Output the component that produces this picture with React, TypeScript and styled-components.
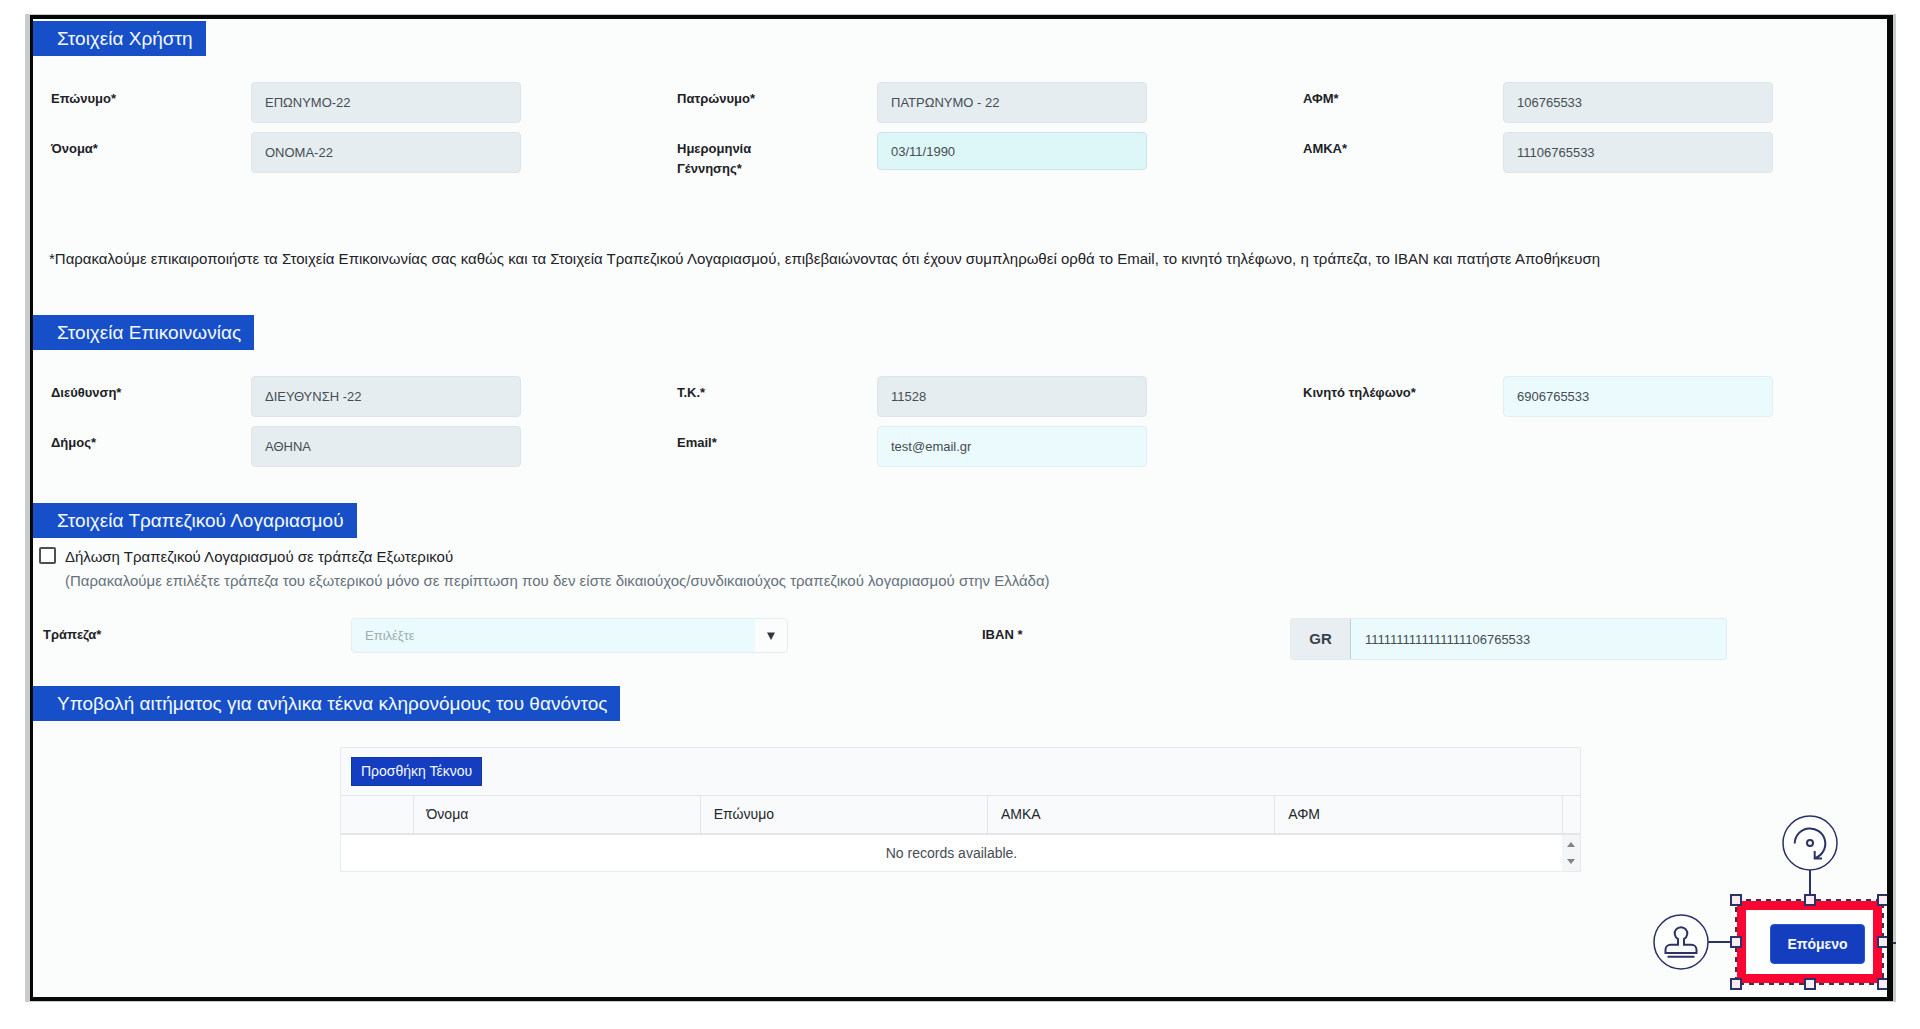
import React, { useId } from "react";
import styled, { createGlobalStyle } from "styled-components";

const GlobalStyle = createGlobalStyle`
  *, *::before, *::after { box-sizing: border-box; }
  body {
    margin: 0;
    background: #ffffff;
    color: #1d2226;
    font-family: "Liberation Sans", Arial, sans-serif;
    font-size: 14px;
    line-height: 20px;
  }
  input, select, button { font-family: inherit; }
`;

const Shell = styled.div`
  position: relative;
  margin: 14px 24px 24px 25px;
  padding: 1px 3px 1px 5px;
  background: #c9cccb;

  &::after {
    content: "";
    position: absolute;
    right: 0;
    bottom: 58px;
    width: 3px;
    height: 2px;
    background: #2b3264;
  }
`;

const Frame = styled.main`
  display: flex;
  flex-direction: column;
  padding: 2px 0 13px;
  overflow: hidden;
  border: solid #050807;
  border-width: 4px 6px 4px 3px;
  background: #fbfdfd;
`;

const SectionTitle = styled.h2`
  align-self: flex-start;
  margin: 0 0 26px;
  padding: 0 13px 0 24px;
  background: #174fc9;
  color: #f4faff;
  font-size: 19px;
  font-weight: 400;
  line-height: 35px;
`;

const FieldGrid = styled.div<{ $after: number }>`
  display: grid;
  grid-template-columns: repeat(3, minmax(0, 1fr));
  gap: 9px 156px;
  margin: 0 114px ${(p) => p.$after}px 18px;
`;

const FieldBox = styled.div`
  display: grid;
  grid-template-columns: minmax(0, 20fr) minmax(0, 27fr);
  align-items: start;
`;

const Label = styled.label`
  max-width: 120px;
  padding-top: 7px;
  font-size: 13px;
  font-weight: 700;
`;

type Tone = "locked" | "open" | "date";

const tones: Record<Tone, { bg: string; line: string; height: number }> = {
  locked: { bg: "#e5edf0", line: "#e0e4e8", height: 41 },
  open: { bg: "#ebfafc", line: "#e1eef2", height: 41 },
  date: { bg: "#ddf6f8", line: "#cde2ea", height: 38 },
};

const TextInput = styled.input<{ $tone: Tone }>`
  width: 100%;
  height: ${(p) => tones[p.$tone].height}px;
  padding: 0 13px;
  border: 1px solid ${(p) => tones[p.$tone].line};
  border-radius: 4px;
  background: ${(p) => tones[p.$tone].bg};
  color: #454d53;
  font-size: 13px;
  outline: none;
`;

const Notice = styled.p`
  margin: 0 24px 44px 16px;
  font-size: 15px;
  line-height: 24px;
`;

const ForeignBank = styled.div`
  display: grid;
  grid-template-columns: 17px 1fr;
  column-gap: 9px;
  margin: -19px 0 25px 6px;
  font-size: 15px;
  line-height: 24px;
`;

const CheckBox = styled.input`
  appearance: none;
  width: 17px;
  height: 17px;
  margin: 2px 0 0;
  border: 2px solid #4a5054;
  border-radius: 2px;
  background: #ffffff;

  &:checked { background: #174fc9; }
`;

const Hint = styled.span`
  grid-column: 2;
  color: #66717b;
`;

const BankGrid = styled.div`
  display: grid;
  grid-template-columns: repeat(2, minmax(0, 1fr));
  column-gap: 194px;
  margin: 0 160px 26px 10px;
`;

const BankField = styled.div`
  display: grid;
  grid-template-columns: minmax(0, 308fr) minmax(0, 437fr);
  align-items: start;
`;

const SelectBox = styled.div`
  display: grid;
  grid-template-columns: 1fr 32px;
  height: 35px;
  border: 1px solid #e4edf0;
  border-radius: 4px;
  background: #fbfdfd;
  overflow: hidden;
`;

const Select = styled.select`
  grid-area: 1 / 1 / 2 / 3;
  appearance: none;
  padding: 0 13px;
  border: 0;
  background: linear-gradient(#ebfafc, #ebfafc) left / calc(100% - 32px) 100% no-repeat;
  color: #9aaeb1;
  font-size: 13px;
  outline: none;
`;

const SelectArrow = styled.svg`
  grid-area: 1 / 2 / 2 / 3;
  place-self: center;
  pointer-events: none;
`;

const IbanGroup = styled.div`
  display: flex;
  height: 42px;
  border: 1px solid #dfecf0;
  border-radius: 3px;
  background: #ebfafc;
`;

const IbanPrefix = styled.span`
  display: flex;
  align-items: center;
  justify-content: center;
  width: 60px;
  border-right: 1px solid #bdd3da;
  background: #e8eef1;
  color: #39434b;
  font-size: 15px;
  font-weight: 700;
`;

const IbanInput = styled.input`
  flex: 1;
  min-width: 0;
  padding: 0 14px;
  border: 0;
  background: transparent;
  color: #454d53;
  font-size: 13px;
  outline: none;
`;

const GridPanel = styled.div`
  margin: 0 306px 28px 307px;
  border: 1px solid #e8ebee;
`;

const Toolbar = styled.div`
  padding: 9px 10px;
  background: #f8fafc;
`;

const AddButton = styled.button`
  display: block;
  height: 29px;
  padding: 0 9px;
  border: 1px solid #1238a0;
  background: #153dc0;
  color: #f4faff;
  font-size: 14px;
  line-height: 27px;
`;

const Table = styled.table`
  width: 100%;
  border-collapse: collapse;
  table-layout: fixed;
`;

const HeadCell = styled.th`
  height: 38px;
  padding: 0 13px;
  border: solid #e3e6e9;
  border-width: 1px 0 2px 1px;
  background: #f8fafc;
  color: #22272b;
  font-size: 14px;
  font-weight: 400;
  text-align: left;

  &:first-child { border-left: 0; }
`;

const EmptyCell = styled.td`
  height: 37px;
  padding: 0;
  background: #ffffff;
  color: #454d53;
  font-size: 14px;
  text-align: center;
`;

const ScrollCell = styled.td`
  padding: 0;
  background: #f4f5f6;
  text-align: center;

  svg { display: block; margin: 0 auto; }
`;

const ink = "#2b3264";

const Selection = styled.div`
  position: relative;
  align-self: flex-end;
  margin-right: 4px;
  padding: 14px 8px 10px 24px;
  border: 10px solid #fb0532;
  background: #ffffff;
`;

const DashedEdge = styled.svg`
  position: absolute;
  inset: -10px;
  width: calc(100% + 20px);
  height: calc(100% + 20px);
  overflow: visible;
  pointer-events: none;
`;

const NextButton = styled.button`
  display: block;
  width: 95px;
  height: 40px;
  padding: 0;
  border: 1px solid #2459cf;
  border-radius: 4px;
  background: #143ebd;
  color: #f4faff;
  font-size: 14px;
  font-weight: 700;
`;

const Handle = styled.span<{ $x: number; $y: number }>`
  position: absolute;
  left: ${(p) => p.$x}%;
  top: ${(p) => p.$y}%;
  width: 12px;
  height: 12px;
  margin: ${(p) => (p.$y - 50) / 5 - 6}px 0 0 ${(p) => (p.$x - 50) / 5 - 6}px;
  border: 2px solid ${ink};
  background: #f8ecf2;
`;

const RotateTool = styled.svg`
  position: absolute;
  left: calc(50% - 28px);
  bottom: calc(100% + 15px);
`;

const StampTool = styled.svg`
  position: absolute;
  right: calc(100% + 13px);
  top: calc(50% - 28px);
`;

type FieldProps = { label: string; value: string; tone?: Tone; type?: string };

function Field({ label, value, tone = "locked", type = "text" }: FieldProps) {
  const id = useId();
  return (
    <FieldBox>
      <Label htmlFor={id}>{label}</Label>
      <TextInput id={id} type={type} defaultValue={value} readOnly={tone === "locked"} $tone={tone} />
    </FieldBox>
  );
}

const userFields: FieldProps[] = [
  { label: "Επώνυμο*", value: "ΕΠΩΝΥΜΟ-22" },
  { label: "Πατρώνυμο*", value: "ΠΑΤΡΩΝΥΜΟ - 22" },
  { label: "ΑΦΜ*", value: "106765533" },
  { label: "Όνομα*", value: "ΟΝΟΜΑ-22" },
  { label: "Ημερομηνία Γέννησης*", value: "03/11/1990", tone: "date" },
  { label: "ΑΜΚΑ*", value: "11106765533" },
];

const contactFields: FieldProps[] = [
  { label: "Διεύθυνση*", value: "ΔΙΕΥΘΥΝΣΗ -22" },
  { label: "Τ.Κ.*", value: "11528" },
  { label: "Κινητό τηλέφωνο*", value: "6906765533", tone: "open", type: "tel" },
  { label: "Δήμος*", value: "ΑΘΗΝΑ" },
  { label: "Email*", value: "test@email.gr", tone: "open", type: "email" },
];

const columns = ["Όνομα", "Επώνυμο", "ΑΜΚΑ", "ΑΦΜ"];

const handles = [
  [0, 0], [50, 0], [100, 0],
  [0, 50], [100, 50],
  [0, 100], [50, 100], [100, 100],
];

export default function App() {
  return (
    <>
      <GlobalStyle />
      <Shell>
        <Frame>
          <SectionTitle>Στοιχεία Χρήστη</SectionTitle>
          <FieldGrid $after={68}>
            {userFields.map((f) => <Field key={f.label} {...f} />)}
          </FieldGrid>

          <Notice>
            *Παρακαλούμε επικαιροποιήστε τα Στοιχεία Επικοινωνίας σας καθώς και τα Στοιχεία Τραπεζικού Λογαριασμού, επιβεβαιώνοντας ότι έχουν συμπληρωθεί ορθά το Email, το κινητό τηλέφωνο, η τράπεζα, το IBAN και πατήστε Αποθήκευση
          </Notice>

          <SectionTitle>Στοιχεία Επικοινωνίας</SectionTitle>
          <FieldGrid $after={36}>
            {contactFields.map((f) => <Field key={f.label} {...f} />)}
          </FieldGrid>

          <SectionTitle>Στοιχεία Τραπεζικού Λογαριασμού</SectionTitle>
          <ForeignBank>
            <CheckBox id="foreign" type="checkbox" aria-describedby="foreign-hint" />
            <label htmlFor="foreign">Δήλωση Τραπεζικού Λογαριασμού σε τράπεζα Εξωτερικού</label>
            <Hint id="foreign-hint">
              (Παρακαλούμε επιλέξτε τράπεζα του εξωτερικού μόνο σε περίπτωση που δεν είστε δικαιούχος/συνδικαιούχος τραπεζικού λογαριασμού στην Ελλάδα)
            </Hint>
          </ForeignBank>
          <BankGrid>
            <BankField>
              <Label htmlFor="bank">Τράπεζα*</Label>
              <SelectBox>
                <Select id="bank" defaultValue="">
                  <option value="">Επιλέξτε</option>
                </Select>
                <SelectArrow width="8" height="8" viewBox="0 0 8 8" aria-hidden="true">
                  <path d="M0 0.5h8L4 8z" fill="#30373c" />
                </SelectArrow>
              </SelectBox>
            </BankField>
            <BankField>
              <Label htmlFor="iban">IBAN *</Label>
              <IbanGroup>
                <IbanPrefix>GR</IbanPrefix>
                <IbanInput id="iban" type="text" defaultValue="1111111111111111106765533" />
              </IbanGroup>
            </BankField>
          </BankGrid>

          <SectionTitle>Υποβολή αιτήματος για ανήλικα τέκνα κληρονόμους του θανόντος</SectionTitle>
          <GridPanel>
            <Toolbar>
              <AddButton type="button">Προσθήκη Τέκνου</AddButton>
            </Toolbar>
            <Table>
              <colgroup>
                <col width="72" />
                {columns.map((c) => <col key={c} />)}
                <col width="18" />
              </colgroup>
              <thead>
                <tr>
                  <HeadCell />
                  {columns.map((c) => <HeadCell key={c} scope="col">{c}</HeadCell>)}
                  <HeadCell />
                </tr>
              </thead>
              <tbody>
                <tr>
                  <EmptyCell colSpan={5}>No records available.</EmptyCell>
                  <ScrollCell>
                    <svg width="8" height="24" viewBox="0 0 8 24" aria-hidden="true">
                      <path d="M4 1l4 5H0zM0 18h8l-4 5z" fill="#7d8388" />
                    </svg>
                  </ScrollCell>
                </tr>
              </tbody>
            </Table>
          </GridPanel>

          <Selection>
            <NextButton type="button">Επόμενο</NextButton>
            <DashedEdge aria-hidden="true">
              <rect width="100%" height="100%" fill="none" stroke="#ffffff" strokeWidth="2" />
              <rect width="100%" height="100%" fill="none" stroke="#3d3348" strokeWidth="2" strokeDasharray="5 5" />
            </DashedEdge>
            <RotateTool width="56" height="80" viewBox="0 0 56 80" fill="none" stroke={ink} strokeWidth="2" aria-hidden="true">
              <circle cx="28" cy="28" r="27" strokeWidth="1.5" fill="#fdfefe" />
              <path d="M12.700 28.500A15.300 15.300 0 1 1 33.500 43M32.700 36v7.500H40" />
              <circle cx="28" cy="28" r="3" />
              <path d="M28 55v25" />
            </RotateTool>
            <StampTool width="80" height="56" viewBox="0 0 80 56" fill="none" stroke={ink} strokeWidth="2" aria-hidden="true">
              <circle cx="28" cy="28" r="27" strokeWidth="1.5" fill="#fdfefe" />
              <path d="M25 25v5.700h-7.500a5 5 0 0 0-5 5V39h31v-3.300a5 5 0 0 0-5-5H31V25a6.300 6.300 0 1 0-6 0zM14.500 42.700h27M55 28h25" />
            </StampTool>
            {handles.map(([x, y]) => <Handle key={`${x}-${y}`} $x={x} $y={y} />)}
          </Selection>
        </Frame>
      </Shell>
    </>
  );
}
